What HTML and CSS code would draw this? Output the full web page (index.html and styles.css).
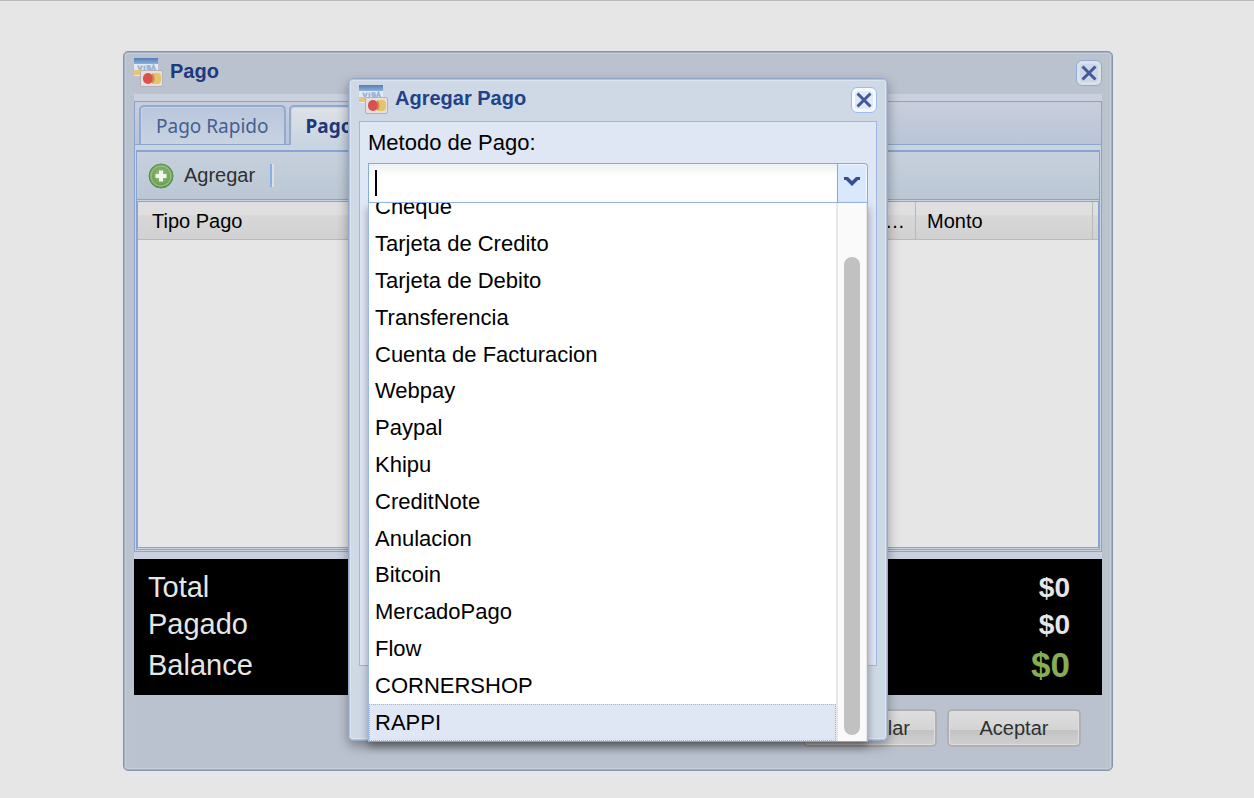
FILE: index.html
```html
<!DOCTYPE html>
<html lang="es">
<head>
<meta charset="utf-8">
<title>Pago</title>
<link rel="stylesheet" href="styles.css">
</head>
<body>
<svg class="symbols" aria-hidden="true">
  <defs>
    <linearGradient id="stripe" x1="0" y1="0" x2="0" y2="1"><stop offset="0" stop-color="#517eb9"/><stop offset="1" stop-color="#8fb0d8"/></linearGradient>
    <radialGradient id="leaf" cx=".5" cy=".45" r=".55"><stop offset="0" stop-color="#9cc287"/><stop offset=".7" stop-color="#6fa358"/><stop offset="1" stop-color="#52883f"/></radialGradient>
    <symbol id="cards" viewBox="0 0 30 30">
      <rect x="0" y="1" width="24" height="17" fill="#e4eaf1"/>
      <rect x="0" y="0" width="24" height="6" fill="url(#stripe)"/>
      <path d="M4 7.500l2 5 2-5M10.500 7.500v5M16.500 8h-3v2h2.500v2H13M17.500 12.500l2-5 2 5" fill="none" stroke="#9db7db" stroke-width="2"/>
      <path d="M0 12h7v5H0z" fill="#e6c67a"/>
      <rect x="6.500" y="12.500" width="22" height="16" rx="1.500" fill="#e5dfdf" stroke="#b3b1b3"/>
      <rect x="17" y="15" width="10" height="11" rx="4" fill="#e2c469"/>
      <rect x="9" y="15" width="10" height="11" rx="5" fill="#d9504e"/>
      <path d="M18 16q3 4.500 0 9" fill="none" stroke="#dc8350" stroke-width="2"/>
    </symbol>
    <symbol id="cross" viewBox="0 0 24 24">
      <path d="M5.500 5.500l13 13M18.500 5.500l-13 13" stroke="#44599a" stroke-width="3" fill="none"/>
    </symbol>
  </defs>
</svg>

<main class="desktop">
  <section class="window payment" aria-labelledby="payment-title">
    <header class="window-header">
      <svg class="window-icon"><use href="#cards"/></svg>
      <h1 class="window-title" id="payment-title">Pago</h1>
      <button class="close" type="button" aria-label="Cerrar Pago"><svg><use href="#cross"/></svg></button>
    </header>
    <div class="payment-body">
      <div class="tab-panel">
        <div class="tabs" role="tablist">
          <button class="tab" type="button" role="tab" aria-selected="false">Pago Rapido</button>
          <button class="tab active" type="button" role="tab" aria-selected="true">Pago Multiple</button>
        </div>
        <div class="tab-content" role="tabpanel">
          <div class="toolbar">
            <button class="tool" type="button">
              <svg class="tool-icon" viewBox="0 0 26 26"><circle cx="13" cy="13" r="12" fill="url(#leaf)" stroke="#5f9150"/><circle cx="13" cy="13" r="10" fill="none" stroke="#94bd82" stroke-width="1.500"/><path d="M13 7.500v11M7.500 13h11" stroke="#f2f4f1" stroke-width="4"/></svg>
              Agregar
            </button>
            <span class="separator"></span>
          </div>
          <div class="grid">
            <table class="grid-table">
              <thead><tr><th>Tipo Pago</th><th class="clipped">…</th><th class="amount">Monto</th><th class="end" aria-hidden="true"></th></tr></thead>
            </table>
          </div>
        </div>
      </div>
      <dl class="totals">
        <div class="total"><dt>Total</dt><dd>$0</dd></div>
        <div class="total"><dt>Pagado</dt><dd>$0</dd></div>
        <div class="total balance"><dt>Balance</dt><dd>$0</dd></div>
      </dl>
    </div>
    <footer class="actions">
      <button class="action" type="button">Cancelar</button>
      <button class="action" type="button">Aceptar</button>
    </footer>
  </section>

  <section class="window add" role="dialog" aria-labelledby="add-title">
    <header class="window-header">
      <svg class="window-icon"><use href="#cards"/></svg>
      <h2 class="window-title" id="add-title">Agregar Pago</h2>
      <button class="close" type="button" aria-label="Cerrar Agregar Pago"><svg><use href="#cross"/></svg></button>
    </header>
    <div class="form">
      <label class="form-label" for="method">Metodo de Pago:</label>
      <div class="combo">
        <input class="combo-input" id="method" type="text" role="combobox" aria-expanded="true" aria-controls="methods" autocomplete="off">
        <span class="caret"></span>
        <button class="combo-button" type="button" aria-label="Mostrar opciones"><svg viewBox="0 0 18 12"><path d="M1 1h4l4 4 4-4h4v3h-2L9 10 3 4H1z" fill="#35508f"/></svg></button>
        <div class="menu">
          <ul class="options" id="methods" role="listbox" aria-label="Metodo de Pago">
            <li class="option" role="option">Cheque</li>
            <li class="option" role="option">Tarjeta de Credito</li>
            <li class="option" role="option">Tarjeta de Debito</li>
            <li class="option" role="option">Transferencia</li>
            <li class="option" role="option">Cuenta de Facturacion</li>
            <li class="option" role="option">Webpay</li>
            <li class="option" role="option">Paypal</li>
            <li class="option" role="option">Khipu</li>
            <li class="option" role="option">CreditNote</li>
            <li class="option" role="option">Anulacion</li>
            <li class="option" role="option">Bitcoin</li>
            <li class="option" role="option">MercadoPago</li>
            <li class="option" role="option">Flow</li>
            <li class="option" role="option">CORNERSHOP</li>
            <li class="option selected" role="option" aria-selected="true">RAPPI</li>
          </ul>
          <div class="scrollbar"><div class="thumb"></div></div>
        </div>
      </div>
    </div>
  </section>
</main>
</body>
</html>
```

FILE: styles.css
```css
* { box-sizing: border-box; }

body {
  margin: 0;
  background: #e6e6e6;
  color: #000;
  font-family: "Liberation Sans", Arial, sans-serif;
  font-size: 20px;
}

button, input { font: inherit; }

.symbols { position: absolute; width: 0; height: 0; }

.desktop {
  position: relative;
  height: 100vh;
  min-height: 798px;
  border-top: 1px solid #b9b9b9;
  overflow: hidden;
}

/* Windows */
.window {
  position: absolute;
  display: flex;
  flex-direction: column;
  border: 1px solid #8296b2;
  border-radius: 5px;
}

.payment {
  top: 50px;
  right: 141px;
  bottom: 27px;
  left: 123px;
  padding: 0 10px;
  background: linear-gradient(90deg, #b9c4ce, #bbc2cf 12px, #bbc2cf calc(100% - 12px), #b9c4ce);
  box-shadow: inset 0 0 0 1px #a3b0c1, inset 0 0 0 2px #c9ced5;
}

.add {
  top: 77px;
  left: 348px;
  width: 540px;
  height: 663px;
  padding: 0 10px;
  background: #ced9e5;
  border-color: #91a8ca;
  box-shadow: inset 0 0 0 1px #b3c4da, inset 0 0 0 2px #dbe3ec, 0 5px 12px rgba(0, 0, 0, .35);
}

.window-header {
  display: flex;
  align-items: flex-start;
  height: 42px;
  padding-top: 6px;
  flex: none;
}

.window-icon { width: 30px; height: 30px; }

.window-title {
  flex: 1;
  margin: 0 0 0 6px;
  color: #1c3a7e;
  font-size: 20px;
  line-height: 26px;
}

.add .window-title { color: #224189; }

.close {
  width: 26px;
  height: 26px;
  margin-top: 2px;
  padding: 0;
  border: 1px solid #93acd8;
  border-radius: 6px;
  background: #cbd7e7;
  box-shadow: inset 0 0 0 3px #dbe1e9;
}

.add .close { background: #dfeaff; border-color: #9fbbed; box-shadow: inset 0 0 0 3px #f7faff; }
.close svg { display: block; width: 24px; height: 24px; }

/* Payment window */
.payment-body {
  flex: 1;
  display: flex;
  flex-direction: column;
  gap: 7px;
  padding-top: 7px;
  background: #cad0de;
}

.tab-panel {
  flex: 1;
  display: flex;
  flex-direction: column;
  border: 1px solid #89a4d3;
  background: #c8d4e0;
}

.tabs {
  display: flex;
  gap: 3px;
  height: 48px;
  padding: 3px 4px 0;
  background: linear-gradient(#c9cedd, #b9c5d6 42px, #8ba6c9 42px, #8ba6c9 43px, #c8d4e0 43px);
}

.tab {
  height: 40px;
  padding: 0 15px;
  border: 2px solid #91aad2;
  border-bottom: 1px solid #8ba6c9;
  border-radius: 5px 5px 0 0;
  background: linear-gradient(#bac6dc, #c8d4e1);
  box-shadow: inset 1px 1px 0 #cbd5e2;
  color: #445f92;
  font-family: "Noto Sans", sans-serif;
  font-size: 19px;
  line-height: 32px;
  white-space: nowrap;
}

.tab.active {
  border-bottom: 0;
  background: linear-gradient(#dfe2e6, #c8d4e0);
  color: #1c397c;
  font-weight: bold;
}

.tab-content {
  flex: 1;
  display: flex;
  flex-direction: column;
  gap: 1px;
  margin: 0 1px 1px;
  border: 1px solid #89a4d3;
  border-top-width: 2px;
}

.toolbar {
  display: flex;
  align-items: center;
  gap: 15px;
  height: 48px;
  padding-left: 11px;
  background: linear-gradient(#c7d1dd, #bbc7d5);
  border-bottom: 1px solid #89a4d3;
}

.tool {
  display: flex;
  align-items: center;
  gap: 10px;
  padding: 0;
  border: 0;
  background: none;
  color: #303030;
}

.tool-icon { width: 26px; height: 26px; }
.separator { width: 4px; height: 23px; background: linear-gradient(90deg, #8cade6 50%, #dce0e6 50%); }

.grid {
  flex: 1;
  border: 1px solid #89a4d3;
  margin-bottom: 1px;
  background: #e6e6e6;
}

.grid-table {
  width: 100%;
  table-layout: fixed;
  border-collapse: separate;
  border-spacing: 0;
}

.grid-table th {
  height: 38px;
  padding: 2px 10px 0;
  border-right: 1px solid #b9b9b9;
  border-bottom: 1px solid #bababa;
  background: linear-gradient(#dfdfdf 35%, #d8d8d8 35%, #d1d1d1);
  font-weight: normal;
  text-align: left;
}

.grid-table th:first-child { padding-left: 14px; }
.grid-table .clipped { width: 120px; text-align: right; }
.grid-table .amount { width: 177px; padding-left: 11px; }
.grid-table .end { width: 5px; padding: 0; border-right: 0; }

.totals {
  margin: 0;
  padding: 10px 32px 8px 14px;
  background: #000;
  color: #e6e6e6;
  font-size: 29px;
}

.total {
  display: flex;
  align-items: center;
  justify-content: space-between;
  height: 37px;
}

.total dd { margin: 0; font-size: 28px; font-weight: bold; }
.balance { height: 44px; }
.balance dd { color: #86ad51; font-size: 35px; }

.actions {
  display: flex;
  justify-content: flex-end;
  gap: 10px;
  padding: 14px 21px 23px 0;
}

.action {
  width: 134px;
  height: 38px;
  padding: 0;
  border: 2px solid #b0b0b0;
  border-radius: 5px;
  background: linear-gradient(#dedede, #d4d4d4 55%, #c3c3c3 55%, #cfcfcf);
  box-shadow: inset 0 0 0 1px #dddddd;
  color: #303030;
}

/* Add payment window */
.form {
  flex: 1;
  margin-bottom: 74px;
  padding: 7px 8px;
  border: 1px solid #9bb8e8;
  background: #dfe6f4;
  font-size: 22px;
}

.form-label { display: block; height: 34px; line-height: 28px; }

.combo { position: relative; display: flex; height: 40px; }

.combo-input {
  flex: 1;
  min-width: 0;
  padding: 0 6px;
  border: 1px solid #86abd9;
  border-bottom-color: #9bb8e8;
  border-right: 0;
  background: linear-gradient(#edf1f1, #fff 12px);
}

.caret {
  position: absolute;
  left: 7px;
  top: 7px;
  width: 2px;
  height: 26px;
  background: #000;
}

.combo-button {
  width: 31px;
  padding: 0 2px 2px 0;
  border: 1px solid #86abd9;
  border-radius: 0 4px 0 0;
  border-bottom-color: #9bb8e8;
  background: #d9e8fd;
  box-shadow: inset -1px 1px 0 #eff6ff;
}

.combo-button svg { display: block; width: 18px; height: 12px; margin: 0 auto; }

.menu {
  position: absolute;
  top: 40px;
  right: 0;
  left: 0;
  display: flex;
  align-items: flex-end;
  height: 539px;
  overflow: hidden;
  border: 1px solid #9bb8e8;
  border-top: 0;
  border-bottom-color: #86a4d3;
  background: #fff;
  box-shadow: 0 5px 8px rgba(0, 0, 0, .35);
}

.options {
  flex: 1;
  display: grid;
  grid-auto-rows: 1fr;
  height: 552px;
  margin: 0;
  padding: 0;
  list-style: none;
}

.option {
  display: flex;
  align-items: center;
  padding: 0 5px;
  border: 1px solid transparent;
}

.selected { border: 1px dotted #9bb3e0; background: #dfe6f4; }

.scrollbar {
  align-self: stretch;
  width: 31px;
  padding: 54px 6px 6px;
  border: solid #e8e8e8;
  border-width: 0 1px 0 2px;
  background: #fafafa;
}

.thumb { height: 100%; border-radius: 8px; background: #c1c1c1; }
```
